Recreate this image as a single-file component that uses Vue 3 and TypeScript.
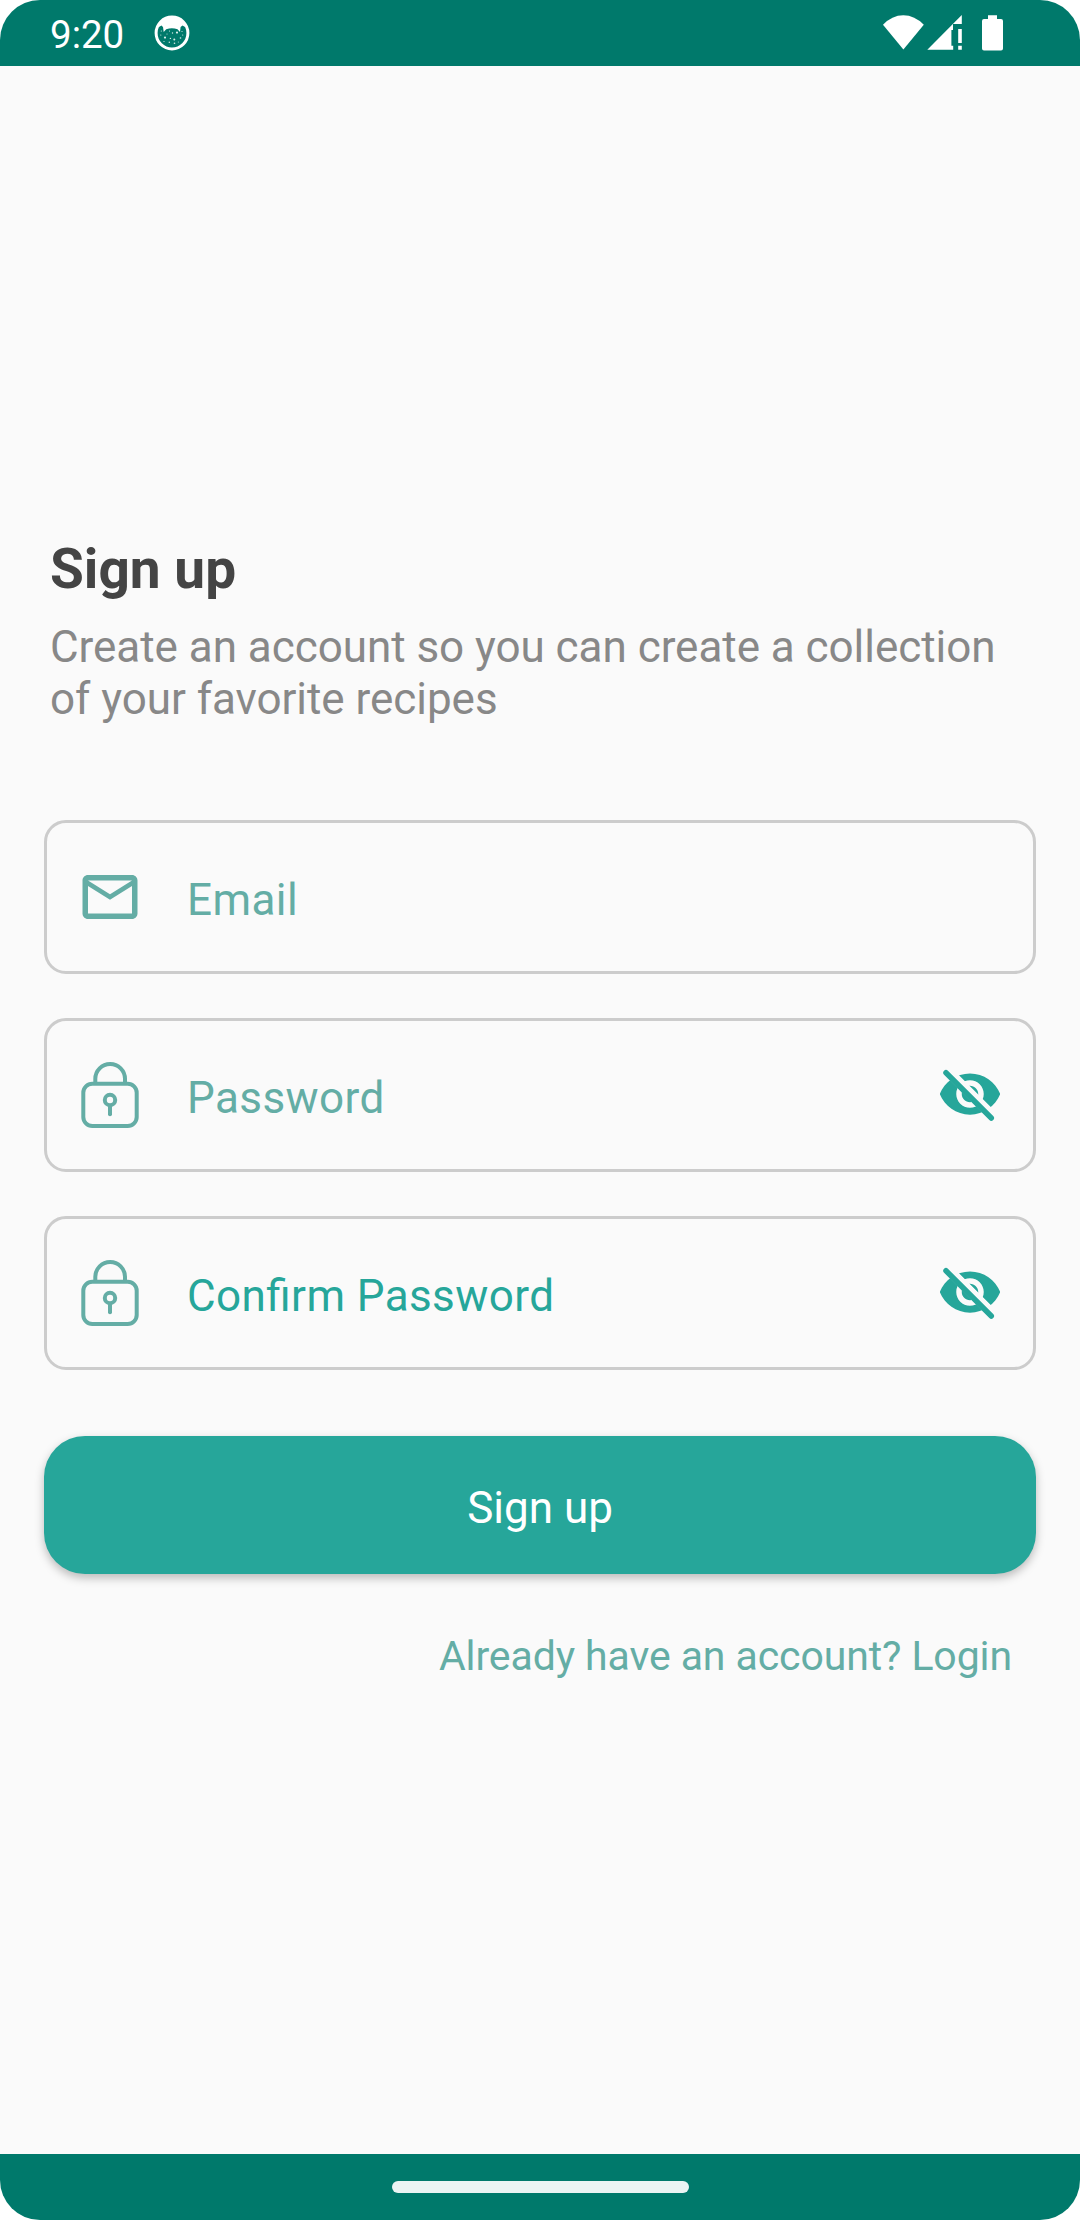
<script setup lang="ts">
interface Field {
  id: string
  label: string
  icon: 'mail' | 'lock'
  strong?: boolean
}

const fields: Field[] = [
  { id: 'email', label: 'Email', icon: 'mail' },
  { id: 'password', label: 'Password', icon: 'lock' },
  { id: 'confirm', label: 'Confirm Password', icon: 'lock', strong: true },
]
</script>

<template>
  <div class="screen">
    <header class="status">
      <div class="status-left">
        <span class="clock">9:20</span>
        <svg class="face" width="36" height="36" viewBox="0 0 36 36">
          <circle cx="18" cy="18" r="15.9" fill="none" stroke="#fff" stroke-width="3" />
          <path d="M4 12.5 Q8 1.500 18 1.500 T32 12.500 L28.500 10.500 L26.600 12 L26 17 L23.500 14.200 Q18 12.200 12.200 14.200 L9.700 17 L9 12 L7.500 10.500 Z" fill="#fff" />
          <g fill="#d5ebe8">
            <circle cx="7.3" cy="16" r=".6" /><circle cx="15.5" cy="16" r=".6" />
            <circle cx="18.5" cy="18" r=".7" /><circle cx="23" cy="17.6" r="1.1" />
            <circle cx="28" cy="16.5" r=".6" /><circle cx="6.8" cy="20" r=".6" />
            <circle cx="11" cy="22.6" r="1.1" /><circle cx="16.4" cy="23.4" r=".7" />
            <circle cx="20.3" cy="24.6" r="1" /><circle cx="26.5" cy="23" r=".8" />
            <circle cx="15.3" cy="27.2" r=".7" /><circle cx="20.5" cy="28.3" r=".8" />
            <circle cx="13" cy="19" r=".5" /><circle cx="28.7" cy="20" r=".6" />
            <circle cx="10" cy="26.5" r=".6" /><circle cx="24.3" cy="27" r=".5" />
          </g>
        </svg>
      </div>
      <svg class="status-icons" width="122" height="38" viewBox="882 14 122 38" fill="#fff">
        <path d="M883 24.7 Q892 15.2 903.3 15.2 T923.8 24.7 L903.4 49.5 Z" />
        <path d="M927.3 49.7 L961.8 15 V24 H953 V30 H951.4 V45.7 H953.2 V49.7 Z" />
        <path d="M958.2 29 H961.8 V43 H958.2 Z M958.2 45.8 H961.8 V49.7 H958.2 Z" />
        <path d="M988 15.2 H997 V19 H1001 Q1003 19 1003 21 V48.6 Q1003 50.6 1001 50.6 H984 Q982 50.6 982 48.6 V21 Q982 19 984 19 H988 Z" />
      </svg>
    </header>

    <main class="content">
      <h1 class="title">Sign up</h1>
      <p class="subtitle">Create an account so you can create a collection of your favorite recipes</p>

      <form class="form" @submit.prevent>
        <div v-for="f in fields" :key="f.id" class="field">
          <svg v-if="f.icon === 'mail'" class="lead" width="66" height="66" viewBox="0 0 24 24">
            <path
              fill="#64ada5"
              d="M20 4H4c-1.100 0-2 .9-2 2v12c0 1.100.9 2 2 2h16c1.100 0 2-.9 2-2V6c0-1.100-.9-2-2-2zM20 18H4V8l8 5 8-5v10zM12 11L4 6h16l-8 5z"
            />
          </svg>
          <svg v-else class="lead" width="66" height="72" viewBox="0 0 66 72" fill="none" stroke="#64ada5" stroke-width="4">
            <rect x="6.3" y="24.700" width="53.400" height="42.300" rx="9" />
            <path d="M18.300 24 V19.800 A14.850 14.850 0 0 1 48 19.800 V24" />
            <circle cx="33" cy="41" r="5.200" />
            <path d="M33 47 V55.200" stroke-linecap="round" />
          </svg>
          <span class="label" :class="{ strong: f.strong }">{{ f.label }}</span>
          <svg v-if="f.icon === 'lock'" class="eye" width="66" height="66" viewBox="0 0 24 24">
            <clipPath :id="'clip-' + f.id">
              <path d="M2 4.270 L19.730 22 L22.270 19.460 L4.540 1.730 V1 H23 V23 H1 V4.270 Z" />
            </clipPath>
            <path
              :clip-path="`url(#clip-${f.id})`"
              fill="#26a69a"
              d="M12 4.500C7 4.500 2.730 7.610 1 12c1.730 4.390 6 7.500 11 7.500s9.270-3.110 11-7.500c-1.730-4.390-6-7.500-11-7.500zM12 17c-2.760 0-5-2.240-5-5s2.240-5 5-5 5 2.240 5 5-2.240 5-5 5zM12 9c-1.660 0-3 1.340-3 3s1.340 3 3 3 3-1.340 3-3-1.340-3-3-3z"
            />
            <path d="M3.270 4.270 L19.740 20.740" stroke="#26a69a" stroke-width="2" stroke-linecap="round" />
          </svg>
        </div>

        <button class="submit" type="submit">Sign up</button>
      </form>

      <p class="login">Already have an account? Login</p>
    </main>

    <footer class="nav"><div class="handle"></div></footer>
  </div>
</template>

<style>
body {
  margin: 0;
  background: #fff;
}
</style>

<style scoped>
.screen {
  width: 1080px;
  height: 2220px;
  display: flex;
  flex-direction: column;
  background: #fafafa;
  border-radius: 40px;
  overflow: hidden;
  font-family: Roboto, sans-serif;
}

.status {
  height: 66px;
  flex: none;
  box-sizing: border-box;
  padding: 0 76px 0 50px;
  display: flex;
  align-items: center;
  justify-content: space-between;
  background: #00796b;
}

.status-left {
  display: flex;
  align-items: center;
}

.clock {
  font-size: 38.5px;
  line-height: 46px;
  padding-top: 3px;
  color: #fff;
}

.face {
  margin-left: 29.5px;
}

.content {
  flex: 1;
  padding: 471px 44px 0;
}

.title {
  margin: 0 6px;
  font-size: 55px;
  line-height: 64px;
  font-weight: 700;
  color: #444;
}

.subtitle {
  margin: 20px 6px 0;
  font-size: 44px;
  line-height: 52px;
  letter-spacing: -0.04px;
  color: #888;
}

.form {
  margin-top: 95px;
  display: flex;
  flex-direction: column;
  gap: 44px;
}

.field {
  height: 154px;
  box-sizing: border-box;
  border: 3px solid #ccc;
  border-radius: 22px;
  padding: 0 30px;
  display: flex;
  align-items: center;
}

.lead {
  flex: none;
}

.label {
  flex: 1;
  margin-left: 44px;
  padding-top: 6px;
  font-size: 44px;
  line-height: 52px;
  letter-spacing: 0.4125px;
  font-feature-settings: 'liga' 1;
  color: #64ada5;
}

.label.strong {
  color: #26a69a;
}

.eye {
  margin-bottom: 3px;
}

.submit {
  height: 138px;
  margin: 22px 0 0;
  padding: 6px 0 0;
  border: 0;
  border-radius: 41px;
  background: #26a69a;
  box-shadow: 0 4px 10px rgba(0, 0, 0, 0.26);
  font-family: inherit;
  font-size: 44px;
  line-height: 52px;
  color: #fff;
}

.login {
  margin: 57px 24px 0 0;
  font-size: 41px;
  line-height: 50px;
  letter-spacing: -0.1px;
  text-align: right;
  color: #64ada5;
}

.nav {
  height: 66px;
  flex: none;
  display: flex;
  align-items: center;
  justify-content: center;
  background: #00796b;
}

.handle {
  width: 297px;
  height: 12px;
  border-radius: 6px;
  background: #ebf4f3;
}
</style>
